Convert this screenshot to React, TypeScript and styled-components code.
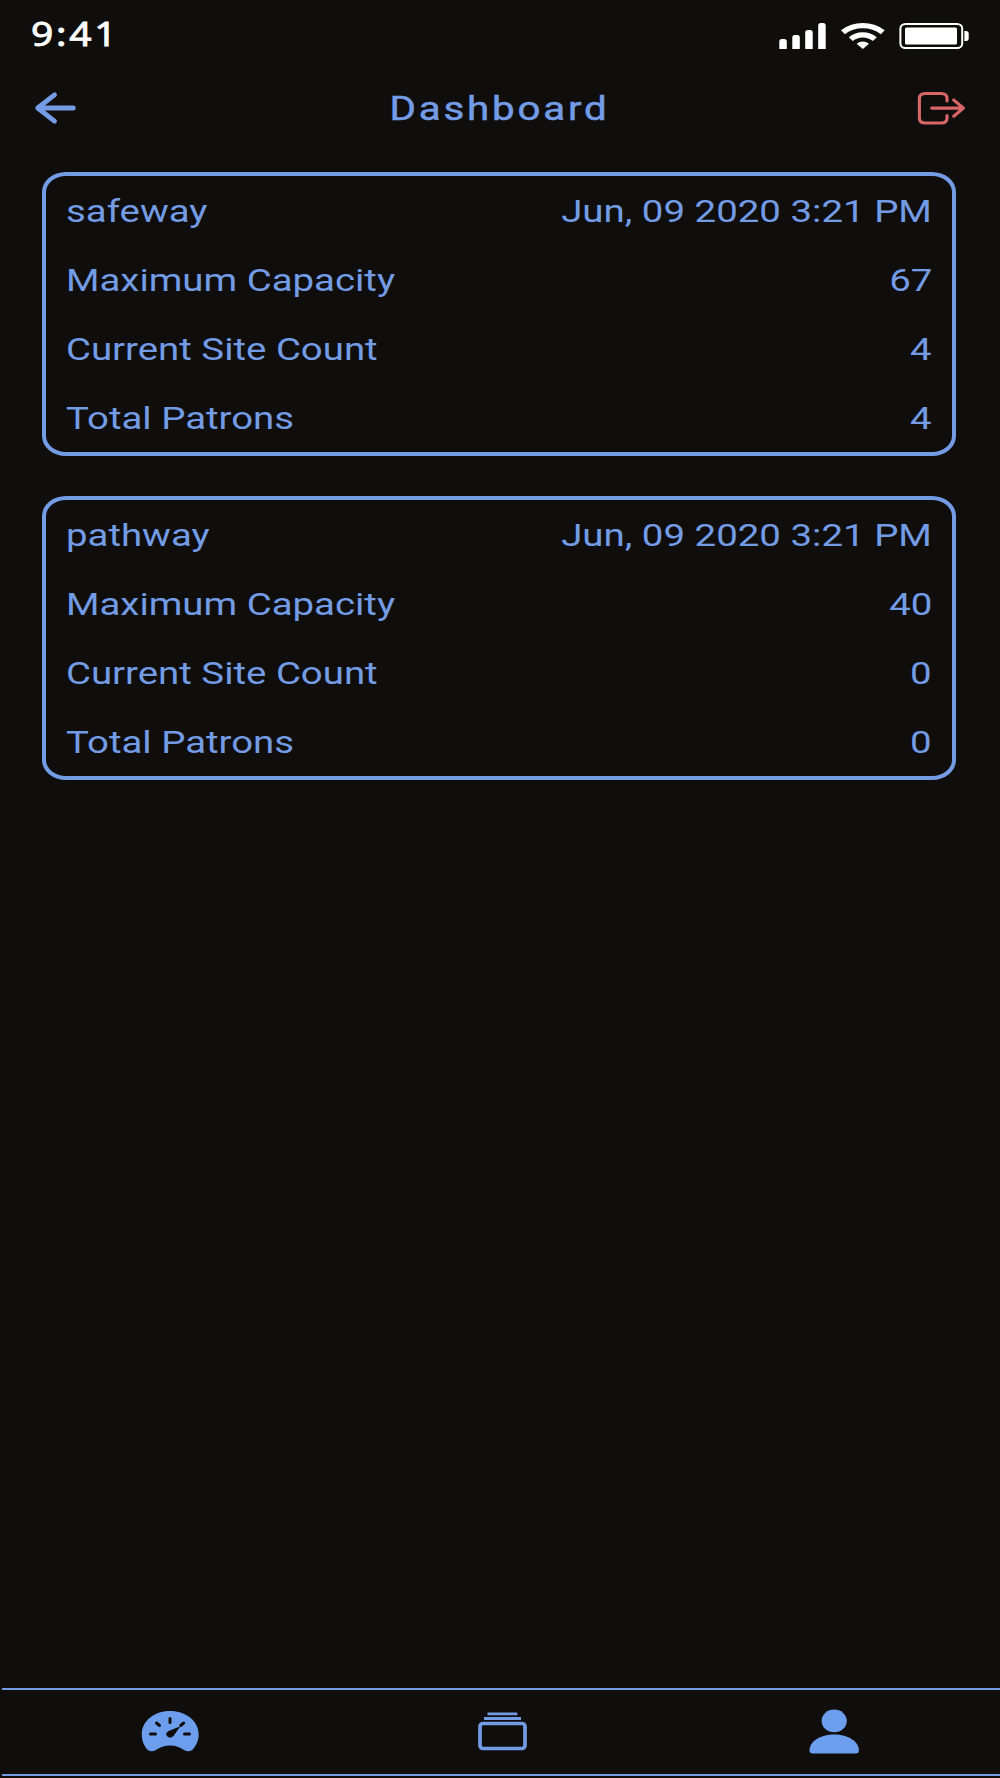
import React from "react";
import styled, { createGlobalStyle } from "styled-components";

const BLUE = "#739ce5";
const FILL = "#6d9eee";
const RED = "#d96768";
const BG = "#0f0e0c";

const GlobalStyle = createGlobalStyle`
  body { margin: 0; background: ${BG}; }
  * { box-sizing: border-box; }
`;

const Screen = styled.div`
  width: 1000px;
  height: 1778px;
  display: flex;
  flex-direction: column;
  background: ${BG};
  color: ${BLUE};
  font-family: Roboto, "Liberation Sans", sans-serif;
  overflow: hidden;
`;

const StatusBar = styled.header`
  height: 72px;
  padding: 0 31px 0 31px;
  display: flex;
  justify-content: space-between;
  align-items: center;
`;

const Clock = styled.time`
  font: 400 32.5px/40px "Noto Sans", sans-serif;
  color: #fff;
  letter-spacing: 2.3px;
  padding-bottom: 4px;
  -webkit-text-stroke: 0.8px #fff;
  transform: scaleX(1.2);
  transform-origin: left center;
`;

const StatusIcons = styled.div`
  display: flex;
  gap: 14px;
`;

const NavBar = styled.nav`
  height: 72px;
  padding: 0 33px;
  display: grid;
  grid-template-columns: 50px 1fr 50px;
  align-items: center;
`;

const Title = styled.h1`
  margin: 0 1px 0 0;
  padding-top: 2px;
  font-size: 33px;
  line-height: 40px;
  font-weight: 400;
  -webkit-text-stroke: 0.5px ${BLUE};
  letter-spacing: 2.3px;
  text-align: center;
  transform: scaleX(1.22);
`;

const IconButton = styled.button`
  display: flex;
  padding: 0;
  border: 0;
  background: none;
`;

const CardList = styled.main`
  flex: 1;
  display: flex;
  flex-direction: column;
  gap: 40px;
  padding: 28px 44px 0 42px;
`;

const Card = styled.section`
  height: 284px;
  padding: 0 20px 0 19.5px;
  border: 4px solid ${BLUE};
  border-radius: 24px / 20px;
`;

const Row = styled.div`
  height: 69.2px;
  padding-top: 2px;
  display: flex;
  justify-content: space-between;
  align-items: center;
  font-size: 31.5px;
  line-height: 36px;
`;

const Label = styled.span`
  transform: scaleX(1.218);
  transform-origin: left center;
`;

const Value = styled.span`
  transform: scaleX(1.22);
  transform-origin: right center;
`;

const TabBar = styled.footer`
  height: 88px;
  margin: 0 0 2px 2px;
  border: solid ${BLUE};
  border-width: 2px 0;
  display: grid;
  grid-template-columns: repeat(3, 332.3px);
`;

const Tab = styled.button`
  display: flex;
  align-items: center;
  justify-content: center;
  padding: 0 0 0 3px;
  border: 0;
  background: none;
`;

const sites = [
  { name: "safeway", time: "Jun, 09 2020 3:21 PM", capacity: 67, count: 4, patrons: 4 },
  { name: "pathway", time: "Jun, 09 2020 3:21 PM", capacity: 40, count: 0, patrons: 0 },
];

const Signal = () => (
  <svg width="48" height="28" viewBox="779 22 48 28" fill="#fff">
    <path d="M779.3 49v-7.500q0-2.500 2.500-2.500h2.500q2.500 0 2.500 2.500v7.500zM792.300 49v-11.500q0-2.500 2.500-2.500h2.500q2.500 0 2.500 2.500v11.500zM805.200 49v-16.500q0-2.500 2.500-2.500h2.500q2.500 0 2.500 2.500v16.500zM818.200 49v-23.500q0-2.500 2.500-2.500h2.500q2.500 0 2.500 2.500v23.500z" />
  </svg>
);

const Wifi = () => (
  <svg width="44" height="28" viewBox="841 22 44 28" fill="#fff">
    <path d="M841 30.200Q850.500 23 862.800 23T884.700 30.200L880.800 34.200Q873 28.300 862.800 28.300T844.900 34.200ZM848.800 37.200Q855 32.200 862.800 32.200T876.800 37.200L872.900 41Q868.500 37.400 862.800 37.400T852.700 41ZM856.700 43.700Q859.500 41.600 862.800 41.600T868.900 43.700L862.800 49Z" />
  </svg>
);

const Battery = () => (
  <svg width="70" height="28" viewBox="899 22 70 28">
    <rect x="900.400" y="24" width="61.800" height="24" rx="5" ry="4.500" fill="none" stroke="#fff" strokeWidth="2" />
    <rect x="905" y="27.600" width="52" height="17" rx="1.500" fill="#fff" />
    <path d="M964.400 31h1.600q2.700 0 2.700 2.500v5q0 2.500-2.700 2.500h-1.600z" fill="#fff" />
  </svg>
);

const BackIcon = () => (
  <svg width="44" height="36" viewBox="33 90 44 36" fill="none" stroke={BLUE} strokeWidth="4.800" strokeLinecap="round" strokeLinejoin="round">
    <path d="M54.500 94.800 37.700 108 54.500 121.200M38 108H73.400" />
  </svg>
);

const LogoutIcon = () => (
  <svg width="50" height="36" viewBox="917.300 90 50 36" fill="none" stroke={RED} strokeWidth="3.100" strokeLinecap="round" strokeLinejoin="round">
    <path d="M947.300 101V98.500Q947.300 93.500 941.500 93.500H925.500Q919.700 93.500 919.700 98.500V118Q919.700 123 925.500 123H941.500Q947.300 123 947.300 118V115.500M932 108.100H963.500M954 100 963.800 108.100 954 116.200" />
  </svg>
);

const GaugeIcon = () => (
  <svg width="58" height="44" viewBox="141 1710 58 44">
    <path d="M170 1711C186 1711 198.700 1721 198.700 1734.500C198.700 1740.500 196 1746 192.500 1749.700Q188.500 1752.700 184.500 1750.300Q178 1745.500 170 1745.500T155.500 1750.300Q151.500 1752.700 147.500 1749.700C144 1746 141.800 1740.500 141.800 1734.500C141.800 1721 154 1711 170 1711Z" fill={FILL} />
    <path d="M150.500 1734H155.500M184.500 1734H189.500M170 1718.500V1722.500M156.500 1723 159.500 1725.500M183.700 1723 180.700 1725.500" stroke={BG} strokeWidth="3" strokeLinecap="round" />
    <path d="M179.300 1727.200 173 1736Q169.500 1738.500 167.300 1736Q165.600 1733.500 168 1731.800Z" fill={BG} stroke={BG} strokeLinejoin="round" />
  </svg>
);

const AlbumsIcon = () => (
  <svg width="50" height="40" viewBox="477 1712 50 40" fill="none" stroke={BLUE}>
    <rect x="480" y="1723.500" width="45" height="25" rx="3" strokeWidth="3.700" />
    <path d="M487.500 1713.800H517.300M484 1718.500H521" strokeWidth="2.800" />
  </svg>
);

const PersonIcon = () => (
  <svg width="50" height="46" viewBox="809.500 1708.400 50 46" fill={FILL}>
    <ellipse cx="834.700" cy="1720.300" rx="12.600" ry="11.300" />
    <path d="M813 1753Q810 1753 810 1750C810 1741 820.500 1734 834.700 1734S859.400 1741 859.400 1750Q859.400 1753 856.400 1753Z" />
  </svg>
);

export default function App() {
  return (
    <Screen>
      <GlobalStyle />
      <StatusBar>
        <Clock>9:41</Clock>
        <StatusIcons>
          <Signal />
          <Wifi />
          <Battery />
        </StatusIcons>
      </StatusBar>
      <NavBar>
        <IconButton aria-label="Back"><BackIcon /></IconButton>
        <Title>Dashboard</Title>
        <IconButton aria-label="Log out"><LogoutIcon /></IconButton>
      </NavBar>
      <CardList>
        {sites.map((site) => (
          <Card key={site.name}>
            <Row><Label>{site.name}</Label><Value>{site.time}</Value></Row>
            <Row><Label>Maximum Capacity</Label><Value>{site.capacity}</Value></Row>
            <Row><Label>Current Site Count</Label><Value>{site.count}</Value></Row>
            <Row><Label>Total Patrons</Label><Value>{site.patrons}</Value></Row>
          </Card>
        ))}
      </CardList>
      <TabBar>
        <Tab aria-label="Dashboard"><GaugeIcon /></Tab>
        <Tab aria-label="Sites"><AlbumsIcon /></Tab>
        <Tab aria-label="Profile"><PersonIcon /></Tab>
      </TabBar>
    </Screen>
  );
}
